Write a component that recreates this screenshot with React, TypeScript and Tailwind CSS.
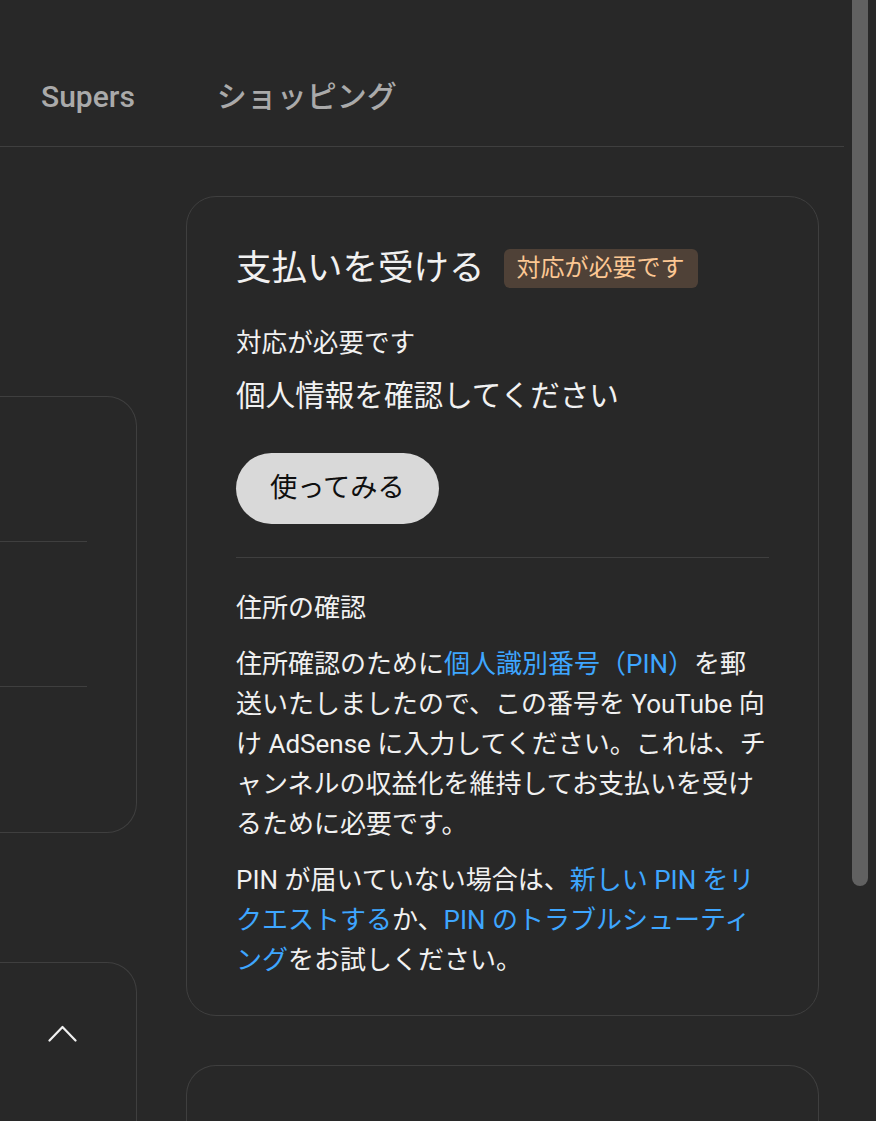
import React from "react";

const tabs = ["Supers", "ショッピング"];

function ChevronUpThin() {
  return (
    <svg width="29" height="17" viewBox="0 0 29 17" fill="none">
      <polyline
        points="1.5,15.5 14.5,2 27.5,15.5"
        stroke="#f1f1f1"
        strokeWidth="2.2"
        strokeLinecap="round"
        strokeLinejoin="round"
      />
    </svg>
  );
}

function Link({ children }: { children: React.ReactNode }) {
  return <span className="text-[#3ea6ff]">{children}</span>;
}

export default function App() {
  return (
    <div className="h-screen overflow-hidden bg-[#282828] flex font-[Roboto,'Noto_Sans_CJK_JP',sans-serif] text-[#f1f1f1]">
      <div className="w-[844px] shrink-0 flex flex-col">
        {/* Tabs */}
        <div className="h-[147px] shrink-0 border-b border-[#3f3f3f] flex items-start pt-[79px] pl-[41px] gap-[82px]">
          {tabs.map((t) => (
            <span key={t} className="text-[30px] leading-[36px] font-medium text-[#aaaaaa]">
              {t}
            </span>
          ))}
        </div>

        <div className="flex gap-[49px]">
          {/* Left column (scrolled off to the left) */}
          <div className="w-[137px] shrink-0 flex flex-col">
            <div className="mt-[249px] border-y border-r border-[#3f3f3f] rounded-r-[30px]">
              <div className="mr-[49px]">
                <div className="h-[145px] border-b border-[#3f3f3f]" />
                <div className="h-[145px] border-b border-[#3f3f3f]" />
                <div className="h-[145px]" />
              </div>
            </div>
            <div className="mt-[129px] h-[300px] border-t border-r border-[#3f3f3f] rounded-tr-[30px] flex justify-end pr-[59px] pt-[62px]">
              <ChevronUpThin />
            </div>
          </div>

          {/* Right column */}
          <div className="w-[633px] shrink-0 flex flex-col">
            <div className="mt-[49px] border border-[#3f3f3f] rounded-[30px] px-[49px] pt-[49px] pb-[35px]">
              <div className="flex items-center gap-[19px]">
                <h2 className="text-[35.5px] leading-[44px]">支払いを受ける</h2>
                <span className="h-[39px] px-[13px] flex items-center rounded-[6px] bg-[#4f4137] text-[#fcc793] text-[24px] leading-[30px]">
                  対応が必要です
                </span>
              </div>
              <p className="mt-[35px] text-[25.6px] leading-[36px]">対応が必要です</p>
              <p className="mt-[15px] text-[29.6px] leading-[40px]">個人情報を確認してください</p>
              <button className="mt-[37px] h-[71px] px-[34px] rounded-full bg-[#d9d9d9] text-[#0f0f0f] text-[27.2px]">
                使ってみる
              </button>
              <div className="mt-[33px] border-t border-[#3f3f3f]" />
              <h3 className="mt-[30px] text-[26px] leading-[40px]">住所の確認</h3>
              <p className="mt-[16px] text-[26px] leading-[40px]">
                住所確認のために<Link>個人識別番号（PIN）</Link>を郵送いたしましたので、この番号を YouTube 向け AdSense
                に入力してください。これは、チャンネルの収益化を維持してお支払いを受けるために必要です。
              </p>
              <p className="mt-[16px] text-[26px] leading-[40px]">
                PIN が届いていない場合は、<Link>新しい PIN をリクエストする</Link>か、
                <Link>PIN のトラブルシューティング</Link>をお試しください。
              </p>
            </div>
            <div className="mt-[49px] h-[300px] border-t border-x border-[#3f3f3f] rounded-t-[30px]" />
          </div>
        </div>
      </div>

      {/* Scrollbar */}
      <div className="flex-1 pl-[8px]">
        <div className="w-[16px] h-[886px] bg-[#616161] rounded-b-full" />
      </div>
    </div>
  );
}
